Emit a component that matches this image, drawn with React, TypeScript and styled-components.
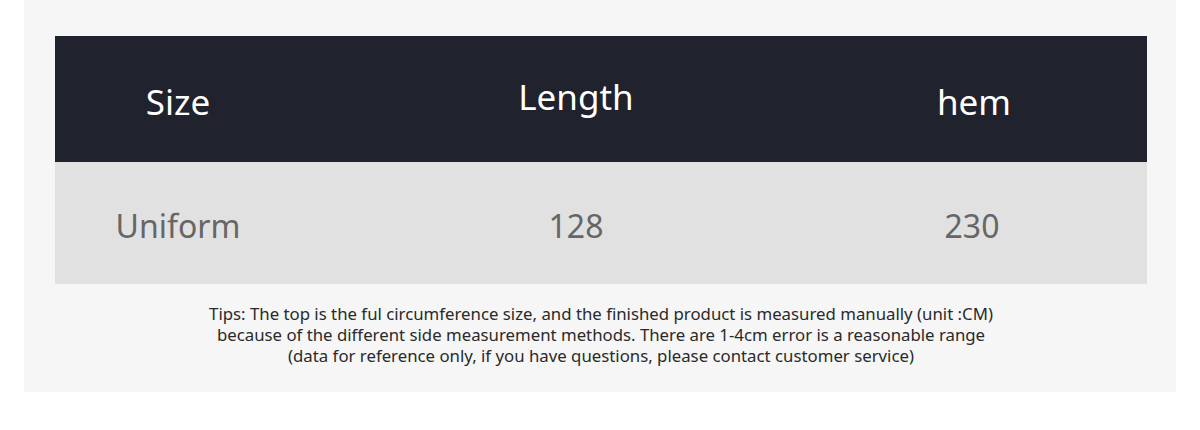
import React from "react";
import styled, { createGlobalStyle } from "styled-components";

const Global = createGlobalStyle`
  html, body { margin: 0; padding: 0; background: #ffffff; }
  body { font-family: "Noto Sans", "Open Sans", sans-serif; }
`;

const Panel = styled.div`
  margin-left: 24px;
  width: 1152px;
  height: 392px;
  box-sizing: border-box;
  padding: 36px 29px 0 31px;
  background: #f6f6f6;
`;

const Row = styled.div<{ $head?: boolean }>`
  display: grid;
  grid-template-columns: 246px 550px 246px 1fr;
  height: ${(p) => (p.$head ? 126 : 122)}px;
  background: ${(p) => (p.$head ? "#20222d" : "#e1e1e1")};
  color: ${(p) => (p.$head ? "#ffffff" : "#666666")};
`;

const Cell = styled.div<{ $size: number; $shift?: number; $dx?: number }>`
  display: flex;
  align-items: center;
  justify-content: center;
  font-size: ${(p) => p.$size}px;
  transform: translate(${(p) => p.$dx ?? 0}px, ${(p) => p.$shift ?? 0}px);
`;

const Tips = styled.p`
  margin: 19px 0 0;
  text-align: center;
  font-size: 16.8px;
  line-height: 21px;
  color: #2a2a2a;
`;

export default function App() {
  return (
    <>
      <Global />
      <Panel>
        <Row $head>
          <Cell $size={35} $shift={2}>Size</Cell>
          <Cell $size={35} $shift={-3}>Length</Cell>
          <Cell $size={35} $shift={2}>hem</Cell>
        </Row>
        <Row>
          <Cell $size={32} $shift={2}>Uniform</Cell>
          <Cell $size={32} $shift={2}>128</Cell>
          <Cell $size={32} $shift={2} $dx={-2}>230</Cell>
        </Row>
        <Tips>
          Tips: The top is the ful circumference size, and the finished product is measured manually (unit :CM)
          <br />
          because of the different side measurement methods. There are 1-4cm error is a reasonable range
          <br />
          (data for reference only, if you have questions, please contact customer service)
        </Tips>
      </Panel>
    </>
  );
}
